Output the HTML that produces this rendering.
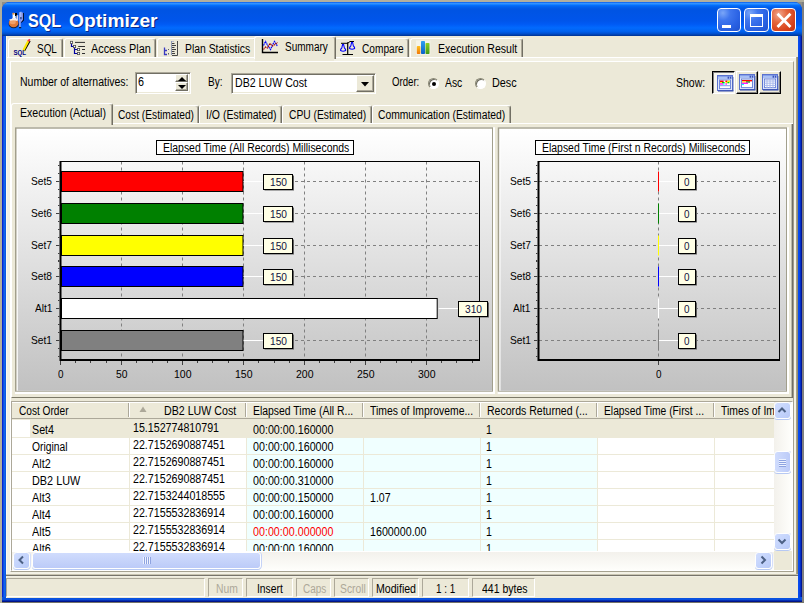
<!DOCTYPE html>
<html lang="en"><head><meta charset="utf-8"><title>SQL Optimizer</title>
<style>
html,body{margin:0;padding:0;}
body{width:804px;height:603px;overflow:hidden;position:relative;background:#b2af9d;font-family:"Liberation Sans",sans-serif;}
body div{position:absolute;box-sizing:border-box;}
.t{position:absolute;white-space:pre;transform-origin:0 50%;font-family:"Liberation Sans",sans-serif;}
svg{position:absolute;overflow:visible;}

</style></head>
<body>
<div style="left:0px;top:0px;width:804px;height:603px;background:#b2af9d;"></div>
<div style="left:802px;top:2px;width:2px;height:601px;background:#808080;"></div>
<div style="left:2px;top:602px;width:802px;height:1px;background:#77756a;"></div>
<div style="left:2px;top:2px;width:8px;height:8px;background:#8f8e88;"></div>
<div style="left:794px;top:2px;width:8px;height:8px;background:#8f8e88;"></div>
<div style="left:2px;top:2px;width:800px;height:600px;border-radius:8px 8px 0 0;background:#0b3fd0;overflow:hidden;"><div style="left:0;top:0;width:800px;height:34px;background:linear-gradient(to bottom,#0058ee 0%,#3593ff 4%,#288eff 6%,#127dff 8%,#036ffc 10%,#0262ee 14%,#0057e5 20%,#0054e3 24%,#0055eb 56%,#005bf5 66%,#026afe 76%,#0062ef 86%,#0052d6 92%,#0040ab 97%,#003092 100%);"></div><div style="left:0;top:34px;width:4px;height:566px;background:linear-gradient(to right,#0019cf 0,#0831d9 25%,#166aee 50%,#0855dd 100%);"></div><div style="left:796px;top:34px;width:4px;height:566px;background:linear-gradient(to right,#0a50ee 0,#0540e8 55%,#001aa0 72%,#00138c 100%);"></div><div style="left:0;top:595px;width:800px;height:5px;background:linear-gradient(to bottom,#0855dd 0,#0a50e0 50%,#001590 85%,#00107a 100%);"></div></div>
<div style="left:6px;top:36px;width:792px;height:562px;background:#ece9d8;"></div>
<span id="t0" class="t" style="left:28.40px;top:8.94px;font-size:17.5px;line-height:24px;color:#fff;font-weight:bold;transform:scaleX(0.9226);text-shadow:1px 1px 0 #0a2a8a;">SQL</span>
<span id="t1" class="t" style="left:68.60px;top:8.94px;font-size:17.5px;line-height:24px;color:#fff;font-weight:bold;transform:scaleX(1.0976);text-shadow:1px 1px 0 #0a2a8a;">Optimizer</span>
<div style="left:717px;top:8px;width:24px;height:24px;border:1px solid #fff;border-radius:4px;background:radial-gradient(circle at 22% 18%,#7aa6f8 0,#3f76ee 30%,#2a62e4 65%,#2052d0 100%);"><div style="left:4px;top:16px;width:9px;height:3px;background:#fff;"></div></div>
<div style="left:744px;top:8px;width:25px;height:24px;border:1px solid #fff;border-radius:4px;background:radial-gradient(circle at 22% 18%,#7aa6f8 0,#3f76ee 30%,#2a62e4 65%,#2052d0 100%);"><div style="left:5px;top:5px;width:13px;height:13px;border:1px solid #fff;border-top:3px solid #fff;"></div></div>
<div style="left:771px;top:8px;width:25px;height:24px;border:1px solid #fff;border-radius:4px;background:radial-gradient(circle at 30% 25%,#f0a890 0,#e4673e 35%,#d9431c 70%,#c43010 100%);"><svg style="left:0.5px;top:0" width="22" height="22" viewBox="0 0 22 22"><path d="M5.5 5.8 L16.5 17 M16.5 5.8 L5.5 17" stroke="#fff" stroke-width="2.8" stroke-linecap="square"/></svg></div>
<div style="left:6px;top:57px;width:792px;height:519px;background:#f3f1e5;border-top:1px solid #fff;border-left:1px solid #fff;"></div>
<div style="left:10px;top:61px;width:784px;height:511px;background:#ece9d8;border-top:1px solid #fff;border-left:1px solid #fff;border-right:1px solid #a5a18f;border-bottom:1px solid #a5a18f;"></div>
<div style="left:796px;top:57px;width:2px;height:519px;background:linear-gradient(to right,#b5ae92,#857f66);"></div>
<div style="left:8px;top:38px;width:55px;height:19px;background:#ece9d8;border-left:1px solid #fff;border-top:1px solid #fff;border-right:1px solid #716f64;box-shadow:inset -1px 0 0 #aca899;border-radius:3px 3px 0 0;"></div>
<div style="left:64px;top:38px;width:92px;height:19px;background:#ece9d8;border-left:1px solid #fff;border-top:1px solid #fff;border-right:1px solid #716f64;box-shadow:inset -1px 0 0 #aca899;border-radius:3px 3px 0 0;"></div>
<div style="left:157px;top:38px;width:100px;height:19px;background:#ece9d8;border-left:1px solid #fff;border-top:1px solid #fff;border-right:1px solid #716f64;box-shadow:inset -1px 0 0 #aca899;border-radius:3px 3px 0 0;"></div>
<div style="left:335px;top:38px;width:74px;height:19px;background:#ece9d8;border-left:1px solid #ece9d8;border-top:1px solid #fff;border-right:1px solid #716f64;box-shadow:inset -1px 0 0 #aca899;border-radius:3px 3px 0 0;"></div>
<div style="left:410px;top:38px;width:113px;height:19px;background:#ece9d8;border-left:1px solid #fff;border-top:1px solid #fff;border-right:1px solid #716f64;box-shadow:inset -1px 0 0 #aca899;border-radius:3px 3px 0 0;"></div>
<div style="left:254px;top:36px;width:82px;height:23px;background:#ece9d8;border-left:1px solid #fff;border-top:1px solid #fff;border-right:1px solid #716f64;box-shadow:inset -1px 0 0 #aca899;border-radius:3px 3px 0 0;"></div>
<div style="left:255px;top:57px;width:79px;height:4px;background:#ece9d8;"></div>
<span id="t2" class="t" style="left:36.80px;top:40.84px;font-size:12px;line-height:16px;color:#000;transform:scaleX(0.8286);">SQL</span>
<span id="t3" class="t" style="left:90.80px;top:40.84px;font-size:12px;line-height:16px;color:#000;transform:scaleX(0.9041);">Access Plan</span>
<span id="t4" class="t" style="left:184.60px;top:40.84px;font-size:12px;line-height:16px;color:#000;transform:scaleX(0.8650);">Plan Statistics</span>
<span id="t5" class="t" style="left:284.60px;top:38.84px;font-size:12px;line-height:16px;color:#000;transform:scaleX(0.8336);">Summary</span>
<span id="t6" class="t" style="left:361.70px;top:40.84px;font-size:12px;line-height:16px;color:#000;transform:scaleX(0.8448);">Compare</span>
<span id="t7" class="t" style="left:437.80px;top:40.84px;font-size:12px;line-height:16px;color:#000;transform:scaleX(0.8795);">Execution Result</span>
<svg style="left:8px;top:11px" width="18" height="18" viewBox="0 0 18 18"><ellipse cx="5.7" cy="12.9" rx="5.1" ry="4.3" fill="#1a0a00" opacity=".75"/><path d="M4.6 2.2 H7.6 V7 L9.5 9 H2.6 L4.6 7Z" fill="#fff"/><rect x="4.6" y="1.8" width="1.8" height="1.8" fill="#f09030"/><path d="M7 2 H9 V6.5 H8 V5 H7Z" fill="#000"/><path d="M8.4 4.5 L10.2 4 V10 L8.4 9Z" fill="#d8d8f4"/><ellipse cx="5.6" cy="12" rx="4.8" ry="4.2" fill="#e07a38"/><ellipse cx="4.8" cy="11" rx="3" ry="2.2" fill="#f0a068"/><path d="M1.2 8.6 Q5.6 6.8 10 8.8 L9 10 Q5.6 8.6 2 9.8Z" fill="#f4f0f0"/><path d="M14.6 2 H15.8 V9.5 L13.2 12 V10.5 L14.6 9Z" fill="#000"/><path d="M11.2 1.2 H12.6 V16.4 H11.2Z" fill="#b4b4f0"/><path d="M12.6 0.8 H13.4 V6 H12.6Z" fill="#fff"/><path d="M13.4 1.4 H14.8 V9 L12.6 11.4 V9.4 L13.4 8.4Z" fill="#a8a8ee"/><rect x="12.4" y="6.4" width="1" height="1.2" fill="#000"/><rect x="11" y="16.2" width="2.2" height="1" fill="#000"/></svg>
<svg style="left:12px;top:39px" width="20" height="19" viewBox="0 0 20 19"><path d="M12.3 11.8 L17.9 1.8" stroke="#000" stroke-width="1.6"/><path d="M11.6 11 L16.6 1.6" stroke="#ffe800" stroke-width="2.2"/><path d="M16 2.2 L17.2 0.9 L18 1.5" stroke="#ff3050" stroke-width="1.6" fill="none"/><path d="M11.2 10.4 L12 12.4 L13 11.2Z" fill="#e0b000"/><text x="1.4" y="16.2" font-family="Liberation Sans, sans-serif" font-weight="bold" font-size="7.2" fill="#000080" textLength="12.6" lengthAdjust="spacingAndGlyphs">SQL</text></svg>
<svg style="left:68px;top:38px" width="20" height="20" viewBox="0 0 20 20"><path d="M3.5 5 V8.5 H6 M6.5 9.5 V15.5 H10 M6.5 11.5 H10" stroke="#0000a0" stroke-width="1.2" fill="none"/><path d="M7 4.4 H17 M10.2 8.5 H17 M14 11.5 H17 M14 15.5 H17" stroke="#303030" stroke-width="1"/><rect x="2.4" y="3.3000000000000003" width="2.2" height="2.2" fill="#fff" stroke="#505050" stroke-width=".8"/><rect x="5.4" y="7.4" width="2.2" height="2.2" fill="#fff" stroke="#505050" stroke-width=".8"/><rect x="9.4" y="10.4" width="2.2" height="2.2" fill="#fff" stroke="#505050" stroke-width=".8"/><rect x="9.4" y="14.4" width="2.2" height="2.2" fill="#fff" stroke="#505050" stroke-width=".8"/></svg>
<svg style="left:160px;top:38px" width="20" height="20" viewBox="0 0 20 20"><path d="M4.5 9.5 V16.5 H7 M4.5 12.5 H7" stroke="#3a3ac0" stroke-width="1.3" fill="none"/><path d="M8.5 11 v1 M8.5 15 v1.5" stroke="#606060" stroke-width="1"/><path d="M11.5 3 V17" stroke="#9098b0" stroke-width="1"/><path d="M17.5 3 V17.5 H12" stroke="#484848" stroke-width="1" fill="none"/><path d="M12 5.5 H14.5 M12 7.5 H16 M12 9.5 H14.5 M12 11.5 H16 M12 13.5 H14.5 M12 15.5 H15" stroke="#404040" stroke-width="1"/><path d="M12 3.5 H14" stroke="#b0b8d0" stroke-width="1"/></svg>
<svg style="left:258px;top:36px" width="24" height="20" viewBox="0 0 24 20"><path d="M4.5 3 V16.5 H20" stroke="#000" stroke-width="1.4" fill="none"/><path d="M5.5 9.5 L7.5 5.5 L10 10 L12.5 13.5 L14.5 9 L16.5 5.5 L18.5 8.5 L19.5 10.5" stroke="#0000ff" stroke-width="1.2" fill="none" stroke-dasharray="1.6 .6"/><path d="M5.5 13.5 L7.5 11 L9.5 12 L12 7.5 L14.5 10 L17 8.5 L19.5 6.5" stroke="#a00000" stroke-width="1.2" fill="none" stroke-dasharray="1.6 .6"/></svg>
<svg style="left:338px;top:38px" width="20" height="20" viewBox="0 0 20 20"><path d="M9.7 4.2 V16.5 M4.5 16.5 H15" stroke="#000" stroke-width="1.2" fill="none"/><path d="M3 5.3 H9.7 L12 3.5 H16" stroke="#000" stroke-width="1" fill="none"/><path d="M4.6 6.5 L5.6 6.5 L6.4 10 Q8 11 7.6 12.6 Q5 14 2.6 12.6 Q2.2 11 3.8 10Z" fill="none" stroke="#0000ff" stroke-width="1.1"/><path d="M13.6 4.5 L14.6 4.5 L15.4 8 Q17 9 16.6 10.6 Q14 12 11.6 10.6 Q11.2 9 12.8 8Z" fill="none" stroke="#0000ff" stroke-width="1.1"/><rect x="4.6" y="6" width="1.2" height="1.2" fill="#0000ff"/><rect x="13.6" y="4" width="1.2" height="1.2" fill="#0000ff"/></svg>
<svg style="left:414px;top:38px" width="20" height="20" viewBox="0 0 20 20"><defs><linearGradient id="go" x1="0" y1="0" x2="0" y2="1"><stop offset="0" stop-color="#ffc020"/><stop offset="1" stop-color="#f07808"/></linearGradient><linearGradient id="gb" x1="0" y1="0" x2="0" y2="1"><stop offset="0" stop-color="#30a0f0"/><stop offset="1" stop-color="#0860c8"/></linearGradient><linearGradient id="gg" x1="0" y1="0" x2="0" y2="1"><stop offset="0" stop-color="#90d020"/><stop offset="1" stop-color="#409818"/></linearGradient></defs><rect x="2" y="2.4" width="14.4" height="14.4" fill="#f8f6ee" opacity=".8"/><rect x="2.8" y="8" width="3.6" height="8" rx=".8" fill="url(#go)"/><rect x="7" y="3" width="4" height="13" rx=".8" fill="url(#gb)"/><rect x="11.5" y="5" width="4" height="11" rx=".8" fill="url(#gg)"/></svg>
<span id="t8" class="t" style="left:19.50px;top:73.84px;font-size:12px;line-height:16px;color:#000;transform:scaleX(0.8746);">Number of alternatives:</span>
<div style="left:135px;top:72px;width:56px;height:22px;background:#fff;border:1px solid;border-color:#aca899 #fff #fff #aca899;box-shadow:inset 1px 1px 0 #716f64,inset -1px -1px 0 #ece9d8;"></div>
<div style="left:175px;top:74px;width:13px;height:8px;background:#ece9d8;border:1px solid;border-color:#fff #716f64 #716f64 #fff;box-shadow:inset -1px -1px 0 #aca899;"><svg style="left:1.5px;top:1.5px" width="8" height="4"><path d="M4 0 L8 4 L0 4Z" fill="#000"/></svg></div>
<div style="left:175px;top:82px;width:13px;height:9px;background:#ece9d8;border:1px solid;border-color:#fff #716f64 #716f64 #fff;box-shadow:inset -1px -1px 0 #aca899;"><svg style="left:1.5px;top:1.5px" width="8" height="4"><path d="M0 0 L8 0 L4 4Z" fill="#000"/></svg></div>
<span id="t9" class="t" style="left:138.40px;top:73.84px;font-size:12px;line-height:16px;color:#000;transform:scaleX(0.8972);">6</span>
<span id="t10" class="t" style="left:208.00px;top:73.84px;font-size:12px;line-height:16px;color:#000;transform:scaleX(0.8360);">By:</span>
<div style="left:231px;top:73px;width:145px;height:21px;background:#fff;border:1px solid;border-color:#aca899 #fff #fff #aca899;box-shadow:inset 1px 1px 0 #716f64,inset -1px -1px 0 #ece9d8;"></div>
<div style="left:356px;top:75px;width:18px;height:17px;background:#ece9d8;border:1px solid;border-color:#fff #716f64 #716f64 #fff;box-shadow:inset -1px -1px 0 #aca899;"><svg style="left:3.5px;top:6px" width="8" height="4.5"><path d="M0 0 L8 0 L4 4.5Z" fill="#000"/></svg></div>
<span id="t11" class="t" style="left:235.00px;top:74.84px;font-size:12px;line-height:16px;color:#000;transform:scaleX(0.8850);">DB2 LUW Cost</span>
<span id="t12" class="t" style="left:391.70px;top:73.84px;font-size:12px;line-height:16px;color:#000;transform:scaleX(0.8026);">Order:</span>
<div style="left:428.0px;top:78.0px;width:11px;height:11px;border-radius:50%;background:#fff;border:1px solid;border-color:#8a8874 #fff #fff #8a8874;box-shadow:inset 1px 1px 0 #6e6c60;"><div style="left:2.5px;top:2.5px;width:4px;height:4px;border-radius:50%;background:#000;"></div></div>
<div style="left:474.5px;top:78.0px;width:11px;height:11px;border-radius:50%;background:#fff;border:1px solid;border-color:#8a8874 #fff #fff #8a8874;box-shadow:inset 1px 1px 0 #6e6c60;"></div>
<span id="t13" class="t" style="left:444.70px;top:74.84px;font-size:12px;line-height:16px;color:#000;transform:scaleX(0.8643);">Asc</span>
<span id="t14" class="t" style="left:492.00px;top:74.84px;font-size:12px;line-height:16px;color:#000;transform:scaleX(0.9033);">Desc</span>
<span id="t15" class="t" style="left:676.20px;top:74.84px;font-size:12px;line-height:16px;color:#000;transform:scaleX(0.8753);">Show:</span>
<div style="left:712px;top:71px;width:23px;height:23px;background:#f6f5ee;border:1px solid;border-color:#000 #fff #fff #000;box-shadow:inset 1px 1px 0 #808080;"><svg style="left:3.5px;top:3px" width="17" height="17" viewBox="0 0 17 17"><rect x="0.5" y="0.5" width="15" height="15" fill="#dfe6fb" stroke="#5a72cf" stroke-width="1"/><rect x="1" y="1" width="14" height="3.2" fill="#a9c0f4"/><rect x="1" y="1" width="14" height="1" fill="#86a0ea"/><rect x="10.6" y="1.7" width="1.4" height="2" fill="#3a50b8"/><rect x="12.8" y="1.7" width="1.4" height="2" fill="#3a50b8"/><rect x="2.5" y="5" width="11" height="8.6" fill="#fff" stroke="#7088da" stroke-width="1"/><rect x="3" y="5.6" width="3.6" height="1.4" fill="#f00"/><rect x="8.4" y="5.6" width="2" height="1.4" fill="#f00"/><rect x="10.4" y="5.6" width="2.6" height="1.4" fill="#ff0"/><rect x="3" y="7" width="2" height="1.3" fill="#ff0"/><rect x="5" y="7" width="2.6" height="1.3" fill="#0c0"/><rect x="8.4" y="7" width="2" height="1.3" fill="#ff0"/><rect x="10.4" y="7" width="2" height="1.3" fill="#0c0"/><rect x="3" y="8.3" width="3" height="1.3" fill="#f0f"/><rect x="6" y="8.3" width="1.6" height="1.3" fill="#0ff"/><rect x="8.4" y="8.3" width="1.6" height="1.3" fill="#f0f"/><rect x="2.5" y="10.2" width="11" height="1" fill="#7f9ae6"/><rect x="1" y="15.4" width="15.4" height="1.1" fill="#3048a8"/><rect x="15.6" y="2" width="1" height="14" fill="#3048a8" opacity=".6"/></svg></div>
<div style="left:736px;top:71px;width:22px;height:23px;background:#ece9d8;border:1px solid;border-color:#fff #000 #000 #fff;box-shadow:inset -1px -1px 0 #808080;"><svg style="left:2px;top:2px" width="17" height="17" viewBox="0 0 17 17"><rect x="0.5" y="0.5" width="15" height="15" fill="#dfe6fb" stroke="#5a72cf" stroke-width="1"/><rect x="1" y="1" width="14" height="3.2" fill="#a9c0f4"/><rect x="1" y="1" width="14" height="1" fill="#86a0ea"/><rect x="10.6" y="1.7" width="1.4" height="2" fill="#3a50b8"/><rect x="12.8" y="1.7" width="1.4" height="2" fill="#3a50b8"/><rect x="2.5" y="5" width="11" height="8.6" fill="#fff" stroke="#7088da" stroke-width="1"/><rect x="3" y="6" width="10" height="1.4" fill="#f00"/><rect x="3" y="7.4" width="4" height="1.2" fill="#ff0"/><rect x="7" y="7.4" width="4" height="1.2" fill="#080"/><rect x="3" y="8.6" width="6" height="1.3" fill="#f0f"/><rect x="3" y="9.9" width="2" height="1.2" fill="#0ff"/><rect x="1" y="15.4" width="15.4" height="1.1" fill="#3048a8"/><rect x="15.6" y="2" width="1" height="14" fill="#3048a8" opacity=".6"/></svg></div>
<div style="left:759px;top:71px;width:22px;height:23px;background:#ece9d8;border:1px solid;border-color:#fff #000 #000 #fff;box-shadow:inset -1px -1px 0 #808080;"><svg style="left:2px;top:2px" width="17" height="17" viewBox="0 0 17 17"><rect x="0.5" y="0.5" width="15" height="15" fill="#dfe6fb" stroke="#5a72cf" stroke-width="1"/><rect x="1" y="1" width="14" height="3.2" fill="#a9c0f4"/><rect x="1" y="1" width="14" height="1" fill="#86a0ea"/><rect x="10.6" y="1.7" width="1.4" height="2" fill="#3a50b8"/><rect x="12.8" y="1.7" width="1.4" height="2" fill="#3a50b8"/><rect x="2.5" y="5" width="11" height="8.6" fill="#fff" stroke="#7088da" stroke-width="1"/><path d="M2.5 7H13.5M2.5 9.2H13.5M2.5 11.4H13.5M5 5V14M8 5V14M11 5V14" stroke="#a8b8ec" stroke-width="1" fill="none"/><rect x="1" y="15.4" width="15.4" height="1.1" fill="#3048a8"/><rect x="15.6" y="2" width="1" height="14" fill="#3048a8" opacity=".6"/></svg></div>
<div style="left:11px;top:123px;width:782px;height:275px;background:#ece9d8;border-top:1px solid #fff;border-left:1px solid #fff;border-bottom:1px solid #7d7a68;"></div>
<svg style="left:0;top:0" width="804" height="603" viewBox="0 0 804 603"><rect x="791.6" y="124" width="1.5" height="274" fill="#716f64"/></svg>
<div style="left:113px;top:105px;width:86px;height:18px;background:#ece9d8;border-left:1px solid #ece9d8;border-top:1px solid #fff;border-right:1px solid #716f64;box-shadow:inset -1px 0 0 #aca899;border-radius:3px 3px 0 0;"></div>
<div style="left:199px;top:105px;width:83px;height:18px;background:#ece9d8;border-left:1px solid #fff;border-top:1px solid #fff;border-right:1px solid #716f64;box-shadow:inset -1px 0 0 #aca899;border-radius:3px 3px 0 0;"></div>
<div style="left:282px;top:105px;width:90px;height:18px;background:#ece9d8;border-left:1px solid #fff;border-top:1px solid #fff;border-right:1px solid #716f64;box-shadow:inset -1px 0 0 #aca899;border-radius:3px 3px 0 0;"></div>
<div style="left:372px;top:105px;width:139px;height:18px;background:#ece9d8;border-left:1px solid #fff;border-top:1px solid #fff;border-right:1px solid #716f64;box-shadow:inset -1px 0 0 #aca899;border-radius:3px 3px 0 0;"></div>
<div style="left:11px;top:103px;width:102px;height:22px;background:#ece9d8;border-left:1px solid #fff;border-top:1px solid #fff;border-right:1px solid #716f64;box-shadow:inset -1px 0 0 #aca899;border-radius:3px 3px 0 0;"></div>
<div style="left:12px;top:123px;width:99px;height:3px;background:#ece9d8;"></div>
<span id="t16" class="t" style="left:19.50px;top:104.84px;font-size:12px;line-height:16px;color:#000;transform:scaleX(0.8830);">Execution (Actual)</span>
<span id="t17" class="t" style="left:117.50px;top:106.84px;font-size:12px;line-height:16px;color:#000;transform:scaleX(0.8505);">Cost (Estimated)</span>
<span id="t18" class="t" style="left:205.80px;top:106.84px;font-size:12px;line-height:16px;color:#000;transform:scaleX(0.8750);">I/O (Estimated)</span>
<span id="t19" class="t" style="left:288.60px;top:106.84px;font-size:12px;line-height:16px;color:#000;transform:scaleX(0.8564);">CPU (Estimated)</span>
<span id="t20" class="t" style="left:377.50px;top:106.84px;font-size:12px;line-height:16px;color:#000;transform:scaleX(0.8591);">Communication (Estimated)</span>
<svg style="left:0;top:0" width="804" height="603" viewBox="0 0 804 603"><defs><linearGradient id="pg15" x1="0" y1="0" x2="0" y2="1"><stop offset="0" stop-color="#ffffff"/><stop offset="1" stop-color="#c1c1c1"/></linearGradient></defs><rect x="15" y="127.3" width="480" height="266.7" fill="#fff"/><rect x="15" y="127.3" width="478" height="264.4" fill="#a29f8c"/><rect x="16.5" y="128.7" width="475.5" height="262.1" fill="#fff"/><rect x="17.8" y="130.0" width="474.2" height="260.8" fill="url(#pg15)"/></svg>
<svg style="left:0;top:0" width="804" height="603" viewBox="0 0 804 603"><defs><linearGradient id="pg497" x1="0" y1="0" x2="0" y2="1"><stop offset="0" stop-color="#ffffff"/><stop offset="1" stop-color="#c1c1c1"/></linearGradient></defs><rect x="497.7" y="127.3" width="291.3" height="266.7" fill="#fff"/><rect x="497.7" y="127.3" width="289.3" height="264.4" fill="#a29f8c"/><rect x="499.2" y="128.7" width="286.8" height="262.1" fill="#fff"/><rect x="500.5" y="130.0" width="285.5" height="260.8" fill="url(#pg497)"/></svg>
<svg style="left:0;top:0" width="804" height="603" viewBox="0 0 804 603"><path d="M121.5 161.5 V360" stroke="#808080" stroke-width="1" stroke-dasharray="3 3" fill="none"/><path d="M182.5 161.5 V360" stroke="#808080" stroke-width="1" stroke-dasharray="3 3" fill="none"/><path d="M243.5 161.5 V360" stroke="#808080" stroke-width="1" stroke-dasharray="3 3" fill="none"/><path d="M304.5 161.5 V360" stroke="#808080" stroke-width="1" stroke-dasharray="3 3" fill="none"/><path d="M365.5 161.5 V360" stroke="#808080" stroke-width="1" stroke-dasharray="3 3" fill="none"/><path d="M426.5 161.5 V360" stroke="#808080" stroke-width="1" stroke-dasharray="3 3" fill="none"/><path d="M61 181.5 H480" stroke="#808080" stroke-width="1" stroke-dasharray="3 3" fill="none"/><path d="M61 213.5 H480" stroke="#808080" stroke-width="1" stroke-dasharray="3 3" fill="none"/><path d="M61 245.5 H480" stroke="#808080" stroke-width="1" stroke-dasharray="3 3" fill="none"/><path d="M61 276.5 H480" stroke="#808080" stroke-width="1" stroke-dasharray="3 3" fill="none"/><path d="M61 308.5 H480" stroke="#808080" stroke-width="1" stroke-dasharray="3 3" fill="none"/><path d="M61 340.5 H480" stroke="#808080" stroke-width="1" stroke-dasharray="3 3" fill="none"/><path d="M60.5 161.5 H479.5 V360" stroke="#000" stroke-width="1" fill="none"/><path d="M60.5 161.0 V361 M59.5 360 H480" stroke="#000" stroke-width="2" fill="none"/><path d="M56 181.5 H59.5" stroke="#404040" stroke-width="1"/><path d="M58 165.5 H59.5" stroke="#404040" stroke-width="1"/><path d="M58 173.5 H59.5" stroke="#404040" stroke-width="1"/><path d="M58 189.5 H59.5" stroke="#404040" stroke-width="1"/><path d="M58 197.5 H59.5" stroke="#404040" stroke-width="1"/><path d="M56 213.5 H59.5" stroke="#404040" stroke-width="1"/><path d="M58 197.5 H59.5" stroke="#404040" stroke-width="1"/><path d="M58 205.5 H59.5" stroke="#404040" stroke-width="1"/><path d="M58 221.5 H59.5" stroke="#404040" stroke-width="1"/><path d="M58 229.5 H59.5" stroke="#404040" stroke-width="1"/><path d="M56 245.5 H59.5" stroke="#404040" stroke-width="1"/><path d="M58 229.5 H59.5" stroke="#404040" stroke-width="1"/><path d="M58 237.5 H59.5" stroke="#404040" stroke-width="1"/><path d="M58 253.5 H59.5" stroke="#404040" stroke-width="1"/><path d="M58 261.5 H59.5" stroke="#404040" stroke-width="1"/><path d="M56 276.5 H59.5" stroke="#404040" stroke-width="1"/><path d="M58 260.5 H59.5" stroke="#404040" stroke-width="1"/><path d="M58 268.5 H59.5" stroke="#404040" stroke-width="1"/><path d="M58 284.5 H59.5" stroke="#404040" stroke-width="1"/><path d="M58 292.5 H59.5" stroke="#404040" stroke-width="1"/><path d="M56 308.5 H59.5" stroke="#404040" stroke-width="1"/><path d="M58 292.5 H59.5" stroke="#404040" stroke-width="1"/><path d="M58 300.5 H59.5" stroke="#404040" stroke-width="1"/><path d="M58 316.5 H59.5" stroke="#404040" stroke-width="1"/><path d="M58 324.5 H59.5" stroke="#404040" stroke-width="1"/><path d="M56 340.5 H59.5" stroke="#404040" stroke-width="1"/><path d="M58 324.5 H59.5" stroke="#404040" stroke-width="1"/><path d="M58 332.5 H59.5" stroke="#404040" stroke-width="1"/><path d="M58 348.5 H59.5" stroke="#404040" stroke-width="1"/><path d="M58 356.5 H59.5" stroke="#404040" stroke-width="1"/><path d="M60.5 361 v4" stroke="#404040" stroke-width="1"/><path d="M75.5 361 v2" stroke="#404040" stroke-width="1"/><path d="M90.5 361 v2" stroke="#404040" stroke-width="1"/><path d="M106.5 361 v2" stroke="#404040" stroke-width="1"/><path d="M121.5 361 v4" stroke="#404040" stroke-width="1"/><path d="M136.5 361 v2" stroke="#404040" stroke-width="1"/><path d="M152.5 361 v2" stroke="#404040" stroke-width="1"/><path d="M167.5 361 v2" stroke="#404040" stroke-width="1"/><path d="M182.5 361 v4" stroke="#404040" stroke-width="1"/><path d="M197.5 361 v2" stroke="#404040" stroke-width="1"/><path d="M212.5 361 v2" stroke="#404040" stroke-width="1"/><path d="M228.5 361 v2" stroke="#404040" stroke-width="1"/><path d="M243.5 361 v4" stroke="#404040" stroke-width="1"/><path d="M258.5 361 v2" stroke="#404040" stroke-width="1"/><path d="M274.5 361 v2" stroke="#404040" stroke-width="1"/><path d="M289.5 361 v2" stroke="#404040" stroke-width="1"/><path d="M304.5 361 v4" stroke="#404040" stroke-width="1"/><path d="M319.5 361 v2" stroke="#404040" stroke-width="1"/><path d="M334.5 361 v2" stroke="#404040" stroke-width="1"/><path d="M350.5 361 v2" stroke="#404040" stroke-width="1"/><path d="M365.5 361 v4" stroke="#404040" stroke-width="1"/><path d="M380.5 361 v2" stroke="#404040" stroke-width="1"/><path d="M396.5 361 v2" stroke="#404040" stroke-width="1"/><path d="M411.5 361 v2" stroke="#404040" stroke-width="1"/><path d="M426.5 361 v4" stroke="#404040" stroke-width="1"/><path d="M441.5 361 v2" stroke="#404040" stroke-width="1"/><path d="M456.5 361 v2" stroke="#404040" stroke-width="1"/><path d="M472.5 361 v2" stroke="#404040" stroke-width="1"/><rect x="61.5" y="171.5" width="181.5" height="20" fill="#ff0000" stroke="#000" stroke-width="1"/><path d="M243.5 181.5 H263" stroke="#fff" stroke-width="1"/><rect x="264.5" y="175.5" width="29.5" height="15" fill="#606060"/><rect x="263.5" y="174.5" width="29" height="15" fill="#ffffe6" stroke="#000" stroke-width="1"/><rect x="61.5" y="203.5" width="181.5" height="20" fill="#008000" stroke="#000" stroke-width="1"/><path d="M243.5 213.5 H263" stroke="#fff" stroke-width="1"/><rect x="264.5" y="207.5" width="29.5" height="15" fill="#606060"/><rect x="263.5" y="206.5" width="29" height="15" fill="#ffffe6" stroke="#000" stroke-width="1"/><rect x="61.5" y="235.5" width="181.5" height="20" fill="#ffff00" stroke="#000" stroke-width="1"/><path d="M243.5 245.5 H263" stroke="#fff" stroke-width="1"/><rect x="264.5" y="239.5" width="29.5" height="15" fill="#606060"/><rect x="263.5" y="238.5" width="29" height="15" fill="#ffffe6" stroke="#000" stroke-width="1"/><rect x="61.5" y="266.5" width="181.5" height="20" fill="#0000ff" stroke="#000" stroke-width="1"/><path d="M243.5 276.5 H263" stroke="#fff" stroke-width="1"/><rect x="264.5" y="270.5" width="29.5" height="15" fill="#606060"/><rect x="263.5" y="269.5" width="29" height="15" fill="#ffffe6" stroke="#000" stroke-width="1"/><rect x="61.5" y="298.5" width="375.7" height="20" fill="#ffffff" stroke="#000" stroke-width="1"/><path d="M438.7 308.5 H458" stroke="#fff" stroke-width="1"/><rect x="459.5" y="302.5" width="29.5" height="15" fill="#606060"/><rect x="458.5" y="301.5" width="29" height="15" fill="#ffffe6" stroke="#000" stroke-width="1"/><rect x="61.5" y="330.5" width="181.5" height="20" fill="#808080" stroke="#000" stroke-width="1"/><path d="M243.5 340.5 H263" stroke="#fff" stroke-width="1"/><rect x="264.5" y="334.5" width="29.5" height="15" fill="#606060"/><rect x="263.5" y="333.5" width="29" height="15" fill="#ffffe6" stroke="#000" stroke-width="1"/></svg>
<span id="t21" class="t" style="left:31.20px;top:172.99px;font-size:11px;line-height:16px;color:#000;transform:scaleX(0.9275);">Set5</span>
<span id="t22" class="t" style="left:270.00px;top:173.99px;font-size:11px;line-height:16px;color:#101040;transform:scaleX(0.9260);">150</span>
<span id="t23" class="t" style="left:31.20px;top:204.99px;font-size:11px;line-height:16px;color:#000;transform:scaleX(0.9275);">Set6</span>
<span id="t24" class="t" style="left:270.00px;top:205.99px;font-size:11px;line-height:16px;color:#101040;transform:scaleX(0.9260);">150</span>
<span id="t25" class="t" style="left:31.20px;top:236.99px;font-size:11px;line-height:16px;color:#000;transform:scaleX(0.9275);">Set7</span>
<span id="t26" class="t" style="left:270.00px;top:237.99px;font-size:11px;line-height:16px;color:#101040;transform:scaleX(0.9260);">150</span>
<span id="t27" class="t" style="left:31.20px;top:267.99px;font-size:11px;line-height:16px;color:#000;transform:scaleX(0.9275);">Set8</span>
<span id="t28" class="t" style="left:270.00px;top:268.99px;font-size:11px;line-height:16px;color:#101040;transform:scaleX(0.9260);">150</span>
<span id="t29" class="t" style="left:34.70px;top:299.99px;font-size:11px;line-height:16px;color:#000;transform:scaleX(0.9226);">Alt1</span>
<span id="t30" class="t" style="left:465.00px;top:300.99px;font-size:11px;line-height:16px;color:#101040;transform:scaleX(0.9260);">310</span>
<span id="t31" class="t" style="left:31.20px;top:331.99px;font-size:11px;line-height:16px;color:#000;transform:scaleX(0.9275);">Set1</span>
<span id="t32" class="t" style="left:270.00px;top:332.99px;font-size:11px;line-height:16px;color:#101040;transform:scaleX(0.9260);">150</span>
<span id="t33" class="t" style="left:57.75px;top:366.19px;font-size:11px;line-height:16px;color:#000;transform:scaleX(0.8980);">0</span>
<span id="t34" class="t" style="left:115.75px;top:366.19px;font-size:11px;line-height:16px;color:#000;transform:scaleX(0.9388);">50</span>
<span id="t35" class="t" style="left:173.75px;top:366.19px;font-size:11px;line-height:16px;color:#000;transform:scaleX(0.9532);">100</span>
<span id="t36" class="t" style="left:234.75px;top:366.19px;font-size:11px;line-height:16px;color:#000;transform:scaleX(0.9532);">150</span>
<span id="t37" class="t" style="left:295.75px;top:366.19px;font-size:11px;line-height:16px;color:#000;transform:scaleX(0.9532);">200</span>
<span id="t38" class="t" style="left:356.75px;top:366.19px;font-size:11px;line-height:16px;color:#000;transform:scaleX(0.9532);">250</span>
<span id="t39" class="t" style="left:417.75px;top:366.19px;font-size:11px;line-height:16px;color:#000;transform:scaleX(0.9532);">300</span>
<div style="left:156px;top:140px;width:198px;height:15px;background:#fff;border:1px solid #000;"></div>
<span id="t40" class="t" style="left:162.60px;top:139.84px;font-size:12px;line-height:16px;color:#000;transform:scaleX(0.8702);">Elapsed Time (All Records) Milliseconds</span>
<svg style="left:0;top:0" width="804" height="603" viewBox="0 0 804 603"><path d="M658.5 161.5 V360" stroke="#808080" stroke-width="1" stroke-dasharray="3 3" fill="none"/><path d="M539 181.5 H779" stroke="#808080" stroke-width="1" stroke-dasharray="3 3" fill="none"/><path d="M539 213.5 H779" stroke="#808080" stroke-width="1" stroke-dasharray="3 3" fill="none"/><path d="M539 245.5 H779" stroke="#808080" stroke-width="1" stroke-dasharray="3 3" fill="none"/><path d="M539 276.5 H779" stroke="#808080" stroke-width="1" stroke-dasharray="3 3" fill="none"/><path d="M539 308.5 H779" stroke="#808080" stroke-width="1" stroke-dasharray="3 3" fill="none"/><path d="M539 340.5 H779" stroke="#808080" stroke-width="1" stroke-dasharray="3 3" fill="none"/><path d="M538.5 161.5 H779.5 V360" stroke="#000" stroke-width="1" fill="none"/><path d="M538.5 161.0 V361 M537.5 360 H780" stroke="#000" stroke-width="2" fill="none"/><path d="M534 181.5 H537.5" stroke="#404040" stroke-width="1"/><path d="M536 165.5 H537.5" stroke="#404040" stroke-width="1"/><path d="M536 173.5 H537.5" stroke="#404040" stroke-width="1"/><path d="M536 189.5 H537.5" stroke="#404040" stroke-width="1"/><path d="M536 197.5 H537.5" stroke="#404040" stroke-width="1"/><path d="M534 213.5 H537.5" stroke="#404040" stroke-width="1"/><path d="M536 197.5 H537.5" stroke="#404040" stroke-width="1"/><path d="M536 205.5 H537.5" stroke="#404040" stroke-width="1"/><path d="M536 221.5 H537.5" stroke="#404040" stroke-width="1"/><path d="M536 229.5 H537.5" stroke="#404040" stroke-width="1"/><path d="M534 245.5 H537.5" stroke="#404040" stroke-width="1"/><path d="M536 229.5 H537.5" stroke="#404040" stroke-width="1"/><path d="M536 237.5 H537.5" stroke="#404040" stroke-width="1"/><path d="M536 253.5 H537.5" stroke="#404040" stroke-width="1"/><path d="M536 261.5 H537.5" stroke="#404040" stroke-width="1"/><path d="M534 276.5 H537.5" stroke="#404040" stroke-width="1"/><path d="M536 260.5 H537.5" stroke="#404040" stroke-width="1"/><path d="M536 268.5 H537.5" stroke="#404040" stroke-width="1"/><path d="M536 284.5 H537.5" stroke="#404040" stroke-width="1"/><path d="M536 292.5 H537.5" stroke="#404040" stroke-width="1"/><path d="M534 308.5 H537.5" stroke="#404040" stroke-width="1"/><path d="M536 292.5 H537.5" stroke="#404040" stroke-width="1"/><path d="M536 300.5 H537.5" stroke="#404040" stroke-width="1"/><path d="M536 316.5 H537.5" stroke="#404040" stroke-width="1"/><path d="M536 324.5 H537.5" stroke="#404040" stroke-width="1"/><path d="M534 340.5 H537.5" stroke="#404040" stroke-width="1"/><path d="M536 324.5 H537.5" stroke="#404040" stroke-width="1"/><path d="M536 332.5 H537.5" stroke="#404040" stroke-width="1"/><path d="M536 348.5 H537.5" stroke="#404040" stroke-width="1"/><path d="M536 356.5 H537.5" stroke="#404040" stroke-width="1"/><path d="M658.5 361 v4" stroke="#404040" stroke-width="1"/><path d="M658.5 171.5 v20" stroke="#ff0000" stroke-width="1"/><path d="M659.0 181.5 H678" stroke="#fff" stroke-width="1"/><rect x="679.5" y="175.5" width="17.5" height="15" fill="#606060"/><rect x="678.5" y="174.5" width="17" height="15" fill="#ffffe6" stroke="#000" stroke-width="1"/><path d="M658.5 203.5 v20" stroke="#008000" stroke-width="1"/><path d="M659.0 213.5 H678" stroke="#fff" stroke-width="1"/><rect x="679.5" y="207.5" width="17.5" height="15" fill="#606060"/><rect x="678.5" y="206.5" width="17" height="15" fill="#ffffe6" stroke="#000" stroke-width="1"/><path d="M658.5 235.5 v20" stroke="#ffff00" stroke-width="1"/><path d="M659.0 245.5 H678" stroke="#fff" stroke-width="1"/><rect x="679.5" y="239.5" width="17.5" height="15" fill="#606060"/><rect x="678.5" y="238.5" width="17" height="15" fill="#ffffe6" stroke="#000" stroke-width="1"/><path d="M658.5 266.5 v20" stroke="#0000ff" stroke-width="1"/><path d="M659.0 276.5 H678" stroke="#fff" stroke-width="1"/><rect x="679.5" y="270.5" width="17.5" height="15" fill="#606060"/><rect x="678.5" y="269.5" width="17" height="15" fill="#ffffe6" stroke="#000" stroke-width="1"/><path d="M658.5 298.5 v20" stroke="#ffffff" stroke-width="1"/><path d="M659.0 308.5 H678" stroke="#fff" stroke-width="1"/><rect x="679.5" y="302.5" width="17.5" height="15" fill="#606060"/><rect x="678.5" y="301.5" width="17" height="15" fill="#ffffe6" stroke="#000" stroke-width="1"/><path d="M658.5 330.5 v20" stroke="#808080" stroke-width="1"/><path d="M659.0 340.5 H678" stroke="#fff" stroke-width="1"/><rect x="679.5" y="334.5" width="17.5" height="15" fill="#606060"/><rect x="678.5" y="333.5" width="17" height="15" fill="#ffffe6" stroke="#000" stroke-width="1"/></svg>
<span id="t41" class="t" style="left:509.60px;top:172.99px;font-size:11px;line-height:16px;color:#000;transform:scaleX(0.9275);">Set5</span>
<span id="t42" class="t" style="left:684.25px;top:173.99px;font-size:11px;line-height:16px;color:#101040;transform:scaleX(0.8980);">0</span>
<span id="t43" class="t" style="left:509.60px;top:204.99px;font-size:11px;line-height:16px;color:#000;transform:scaleX(0.9275);">Set6</span>
<span id="t44" class="t" style="left:684.25px;top:205.99px;font-size:11px;line-height:16px;color:#101040;transform:scaleX(0.8980);">0</span>
<span id="t45" class="t" style="left:509.60px;top:236.99px;font-size:11px;line-height:16px;color:#000;transform:scaleX(0.9275);">Set7</span>
<span id="t46" class="t" style="left:684.25px;top:237.99px;font-size:11px;line-height:16px;color:#101040;transform:scaleX(0.8980);">0</span>
<span id="t47" class="t" style="left:509.60px;top:267.99px;font-size:11px;line-height:16px;color:#000;transform:scaleX(0.9275);">Set8</span>
<span id="t48" class="t" style="left:684.25px;top:268.99px;font-size:11px;line-height:16px;color:#101040;transform:scaleX(0.8980);">0</span>
<span id="t49" class="t" style="left:513.10px;top:299.99px;font-size:11px;line-height:16px;color:#000;transform:scaleX(0.9226);">Alt1</span>
<span id="t50" class="t" style="left:684.25px;top:300.99px;font-size:11px;line-height:16px;color:#101040;transform:scaleX(0.8980);">0</span>
<span id="t51" class="t" style="left:509.60px;top:331.99px;font-size:11px;line-height:16px;color:#000;transform:scaleX(0.9275);">Set1</span>
<span id="t52" class="t" style="left:684.25px;top:332.99px;font-size:11px;line-height:16px;color:#101040;transform:scaleX(0.8980);">0</span>
<span id="t53" class="t" style="left:655.75px;top:366.19px;font-size:11px;line-height:16px;color:#000;transform:scaleX(0.8980);">0</span>
<div style="left:535px;top:140px;width:215px;height:15px;background:#fff;border:1px solid #000;"></div>
<span id="t54" class="t" style="left:541.70px;top:139.84px;font-size:12px;line-height:16px;color:#000;transform:scaleX(0.8694);">Elapsed Time (First n Records) Milliseconds</span>
<div style="left:11px;top:401px;width:782px;height:170px;background:#fff;border:1px solid;border-color:#aca899 #fff #fff #aca899;"></div>
<div style="left:12px;top:402px;width:762px;height:17px;background:#ece9d8;border-bottom:1px solid #aca899;box-shadow:inset 0 1px 0 #fff;"></div>
<div style="left:12px;top:419px;width:762px;height:18px;background:#ece9d8;"></div>
<div style="left:12px;top:420px;width:18px;height:17px;background:#fff;"></div>
<div style="left:246px;top:437px;width:351px;height:114px;background:#f0ffff;"></div>
<svg style="left:0;top:0" width="804" height="603" viewBox="0 0 804 603"><path d="M12 437.5 H774" stroke="#ece9d8" stroke-width="1"/><path d="M12 454.5 H774" stroke="#ece9d8" stroke-width="1"/><path d="M12 471.5 H774" stroke="#ece9d8" stroke-width="1"/><path d="M12 488.5 H774" stroke="#ece9d8" stroke-width="1"/><path d="M12 505.5 H774" stroke="#ece9d8" stroke-width="1"/><path d="M12 522.5 H774" stroke="#ece9d8" stroke-width="1"/><path d="M12 539.5 H774" stroke="#ece9d8" stroke-width="1"/><path d="M129.5 437 V551" stroke="#ece9d8" stroke-width="1"/><path d="M128.5 403 V417" stroke="#aca899" stroke-width="1"/><path d="M129.5 403 V417" stroke="#fff" stroke-width="1"/><path d="M246.5 437 V551" stroke="#ece9d8" stroke-width="1"/><path d="M245.5 403 V417" stroke="#aca899" stroke-width="1"/><path d="M246.5 403 V417" stroke="#fff" stroke-width="1"/><path d="M363.5 437 V551" stroke="#ece9d8" stroke-width="1"/><path d="M362.5 403 V417" stroke="#aca899" stroke-width="1"/><path d="M363.5 403 V417" stroke="#fff" stroke-width="1"/><path d="M480.5 437 V551" stroke="#ece9d8" stroke-width="1"/><path d="M479.5 403 V417" stroke="#aca899" stroke-width="1"/><path d="M480.5 403 V417" stroke="#fff" stroke-width="1"/><path d="M597.5 437 V551" stroke="#ece9d8" stroke-width="1"/><path d="M596.5 403 V417" stroke="#aca899" stroke-width="1"/><path d="M597.5 403 V417" stroke="#fff" stroke-width="1"/><path d="M714.5 437 V551" stroke="#ece9d8" stroke-width="1"/><path d="M713.5 403 V417" stroke="#aca899" stroke-width="1"/><path d="M714.5 403 V417" stroke="#fff" stroke-width="1"/><path d="M139.5 412 L143 406.5 L146.5 412Z" fill="#aca899" stroke="none"/></svg>
<span id="t55" class="t" style="left:18.50px;top:402.84px;font-size:12px;line-height:16px;color:#000;transform:scaleX(0.8435);">Cost Order</span>
<span id="t56" class="t" style="left:163.80px;top:402.84px;font-size:12px;line-height:16px;color:#000;transform:scaleX(0.8874);">DB2 LUW Cost</span>
<span id="t57" class="t" style="left:252.80px;top:402.84px;font-size:12px;line-height:16px;color:#000;transform:scaleX(0.8685);">Elapsed Time (All R...</span>
<span id="t58" class="t" style="left:369.70px;top:402.84px;font-size:12px;line-height:16px;color:#000;transform:scaleX(0.8670);">Times of Improveme...</span>
<span id="t59" class="t" style="left:486.60px;top:402.84px;font-size:12px;line-height:16px;color:#000;transform:scaleX(0.8787);">Records Returned (...</span>
<span id="t60" class="t" style="left:603.70px;top:402.84px;font-size:12px;line-height:16px;color:#000;transform:scaleX(0.8569);">Elapsed Time (First ...</span>
<div style="left:12px;top:420px;width:762px;height:131px;overflow:hidden;">
<span id="t61" class="t" style="left:20.00px;top:1.84px;font-size:12px;line-height:16px;color:#000;transform:scaleX(0.8911);">Set4</span>
<span id="t62" class="t" style="left:121.00px;top:-0.16px;font-size:12px;line-height:16px;color:#000;transform:scaleX(0.8886);">15.152774810791</span>
<span id="t63" class="t" style="left:240.50px;top:1.84px;font-size:12px;line-height:16px;color:#000;transform:scaleX(0.8935);">00:00:00.160000</span>
<span id="t64" class="t" style="left:474.00px;top:1.84px;font-size:12px;line-height:16px;color:#000;transform:scaleX(0.8822);">1</span>
<span id="t65" class="t" style="left:20.00px;top:18.84px;font-size:12px;line-height:16px;color:#000;transform:scaleX(0.8583);">Original</span>
<span id="t66" class="t" style="left:121.00px;top:16.84px;font-size:12px;line-height:16px;color:#000;transform:scaleX(0.8893);">22.7152690887451</span>
<span id="t67" class="t" style="left:240.50px;top:18.84px;font-size:12px;line-height:16px;color:#000;transform:scaleX(0.8935);">00:00:00.160000</span>
<span id="t68" class="t" style="left:474.00px;top:18.84px;font-size:12px;line-height:16px;color:#000;transform:scaleX(0.8822);">1</span>
<span id="t69" class="t" style="left:20.00px;top:35.84px;font-size:12px;line-height:16px;color:#000;transform:scaleX(0.9039);">Alt2</span>
<span id="t70" class="t" style="left:121.00px;top:33.84px;font-size:12px;line-height:16px;color:#000;transform:scaleX(0.8893);">22.7152690887451</span>
<span id="t71" class="t" style="left:240.50px;top:35.84px;font-size:12px;line-height:16px;color:#000;transform:scaleX(0.8935);">00:00:00.160000</span>
<span id="t72" class="t" style="left:474.00px;top:35.84px;font-size:12px;line-height:16px;color:#000;transform:scaleX(0.8822);">1</span>
<span id="t73" class="t" style="left:20.00px;top:52.84px;font-size:12px;line-height:16px;color:#000;transform:scaleX(0.9054);">DB2 LUW</span>
<span id="t74" class="t" style="left:121.00px;top:50.84px;font-size:12px;line-height:16px;color:#000;transform:scaleX(0.8893);">22.7152690887451</span>
<span id="t75" class="t" style="left:240.50px;top:52.84px;font-size:12px;line-height:16px;color:#000;transform:scaleX(0.8935);">00:00:00.310000</span>
<span id="t76" class="t" style="left:474.00px;top:52.84px;font-size:12px;line-height:16px;color:#000;transform:scaleX(0.8822);">1</span>
<span id="t77" class="t" style="left:20.00px;top:69.84px;font-size:12px;line-height:16px;color:#000;transform:scaleX(0.9039);">Alt3</span>
<span id="t78" class="t" style="left:121.00px;top:67.84px;font-size:12px;line-height:16px;color:#000;transform:scaleX(0.8893);">22.7153244018555</span>
<span id="t79" class="t" style="left:240.50px;top:69.84px;font-size:12px;line-height:16px;color:#000;transform:scaleX(0.8935);">00:00:00.150000</span>
<span id="t80" class="t" style="left:357.70px;top:69.84px;font-size:12px;line-height:16px;color:#000;transform:scaleX(0.8819);">1.07</span>
<span id="t81" class="t" style="left:474.00px;top:69.84px;font-size:12px;line-height:16px;color:#000;transform:scaleX(0.8822);">1</span>
<span id="t82" class="t" style="left:20.00px;top:86.84px;font-size:12px;line-height:16px;color:#000;transform:scaleX(0.9039);">Alt4</span>
<span id="t83" class="t" style="left:121.00px;top:84.84px;font-size:12px;line-height:16px;color:#000;transform:scaleX(0.8893);">22.7155532836914</span>
<span id="t84" class="t" style="left:240.50px;top:86.84px;font-size:12px;line-height:16px;color:#000;transform:scaleX(0.8935);">00:00:00.160000</span>
<span id="t85" class="t" style="left:474.00px;top:86.84px;font-size:12px;line-height:16px;color:#000;transform:scaleX(0.8822);">1</span>
<span id="t86" class="t" style="left:20.00px;top:103.84px;font-size:12px;line-height:16px;color:#000;transform:scaleX(0.9039);">Alt5</span>
<span id="t87" class="t" style="left:121.00px;top:101.84px;font-size:12px;line-height:16px;color:#000;transform:scaleX(0.8893);">22.7155532836914</span>
<span id="t88" class="t" style="left:240.50px;top:103.84px;font-size:12px;line-height:16px;color:#ff0000;transform:scaleX(0.8935);">00:00:00.000000</span>
<span id="t89" class="t" style="left:357.70px;top:103.84px;font-size:12px;line-height:16px;color:#000;transform:scaleX(0.8911);">1600000.00</span>
<span id="t90" class="t" style="left:474.00px;top:103.84px;font-size:12px;line-height:16px;color:#000;transform:scaleX(0.8822);">1</span>
<span id="t91" class="t" style="left:20.00px;top:120.84px;font-size:12px;line-height:16px;color:#000;transform:scaleX(0.9039);">Alt6</span>
<span id="t92" class="t" style="left:121.00px;top:118.84px;font-size:12px;line-height:16px;color:#000;transform:scaleX(0.8893);">22.7155532836914</span>
<span id="t93" class="t" style="left:240.50px;top:120.84px;font-size:12px;line-height:16px;color:#000;transform:scaleX(0.8935);">00:00:00.160000</span>
<span id="t94" class="t" style="left:474.00px;top:120.84px;font-size:12px;line-height:16px;color:#000;transform:scaleX(0.8822);">1</span>
</div>
<div style="left:714px;top:402px;width:60px;height:16px;overflow:hidden;">
<span id="t95" class="t" style="left:7.20px;top:0.84px;font-size:12px;line-height:16px;color:#000;transform:scaleX(0.8670);">Times of Improveme...</span>
</div>
<div style="left:774px;top:402px;width:17px;height:149px;background:linear-gradient(to right,#f3f1ec,#fefefb);"></div>
<div style="left:774px;top:402px;width:17px;height:17px;border:1px solid #fff;border-radius:3.5px;background:linear-gradient(135deg,#d2defe 0,#c4d4fc 50%,#b8c9f7 100%);box-shadow:0 1px 0 #b7c9f3,1px 0 0 #d5dffa;"><svg style="left:-1px;top:-1px" width="17" height="17" viewBox="0 0 17 17"><path d="M4.5 10 L8 6.5 L11.5 10" stroke="#4d6185" stroke-width="2" fill="none"/></svg></div>
<div style="left:774px;top:533px;width:17px;height:17px;border:1px solid #fff;border-radius:3.5px;background:linear-gradient(135deg,#d2defe 0,#c4d4fc 50%,#b8c9f7 100%);box-shadow:0 1px 0 #b7c9f3,1px 0 0 #d5dffa;"><svg style="left:-1px;top:-1px" width="17" height="17" viewBox="0 0 17 17"><path d="M4.5 6.5 L8 10 L11.5 6.5" stroke="#4d6185" stroke-width="2" fill="none"/></svg></div>
<div style="left:774px;top:451px;width:17px;height:22px;border:1px solid #fff;border-radius:3.5px;background:linear-gradient(to right,#d0dcfd,#bccbf8);box-shadow:0 1px 0 #b7c9f3,1px 0 0 #c5d3f7;"><div style="left:4px;top:7px;width:7px;height:1px;background:#eef3ff;box-shadow:0 1px 0 #8ea3e0,0 2px 0 #eef3ff,0 3px 0 #8ea3e0,0 4px 0 #eef3ff,0 5px 0 #8ea3e0,0 6px 0 #eef3ff,0 7px 0 #8ea3e0;"></div></div>
<div style="left:12px;top:552px;width:762px;height:18px;background:linear-gradient(to bottom,#f3f1ec,#fefefb);"></div>
<div style="left:13px;top:552px;width:17px;height:17px;border:1px solid #fff;border-radius:3.5px;background:linear-gradient(135deg,#d2defe 0,#c4d4fc 50%,#b8c9f7 100%);box-shadow:0 1px 0 #b7c9f3,1px 0 0 #d5dffa;"><svg style="left:-1px;top:-1px" width="17" height="17" viewBox="0 0 17 17"><path d="M10 4.5 L6.5 8 L10 11.5" stroke="#4d6185" stroke-width="2" fill="none"/></svg></div>
<div style="left:755px;top:552px;width:17px;height:17px;border:1px solid #fff;border-radius:3.5px;background:linear-gradient(135deg,#d2defe 0,#c4d4fc 50%,#b8c9f7 100%);box-shadow:0 1px 0 #b7c9f3,1px 0 0 #d5dffa;"><svg style="left:-1px;top:-1px" width="17" height="17" viewBox="0 0 17 17"><path d="M6.5 4.5 L10 8 L6.5 11.5" stroke="#4d6185" stroke-width="2" fill="none"/></svg></div>
<div style="left:32px;top:552px;width:228.5px;height:17px;border:1px solid #fff;border-radius:3.5px;background:linear-gradient(to bottom,#d0dcfd,#bccbf8);box-shadow:0 1px 0 #b7c9f3,1px 0 0 #c5d3f7;"><div style="left:110px;top:4px;width:1px;height:7px;background:#eef3ff;box-shadow:1px 0 0 #8ea3e0,2px 0 0 #eef3ff,3px 0 0 #8ea3e0,4px 0 0 #eef3ff,5px 0 0 #8ea3e0,6px 0 0 #eef3ff,7px 0 0 #8ea3e0;"></div></div>
<div style="left:774px;top:551px;width:18px;height:19px;background:#ece9d8;"></div>
<div style="left:791px;top:402px;width:1px;height:149px;background:#fefefb;"></div>
<div style="left:6px;top:36px;width:1px;height:562px;background:#fbfaf3;"></div>
<div style="left:6px;top:574px;width:792px;height:1px;background:#c9c5b2;"></div>
<div style="left:6px;top:575px;width:792px;height:1px;background:#77746a;"></div>
<div style="left:6px;top:576px;width:792px;height:1px;background:#f1efe3;"></div>
<div style="left:6px;top:578px;width:199px;height:19px;border:1px solid;border-color:#aca899 #fff #fff #aca899;"></div>
<div style="left:208px;top:578px;width:35px;height:19px;border:1px solid;border-color:#aca899 #fff #fff #aca899;"></div>
<div style="left:246px;top:578px;width:47px;height:19px;border:1px solid;border-color:#aca899 #fff #fff #aca899;"></div>
<div style="left:296px;top:578px;width:35px;height:19px;border:1px solid;border-color:#aca899 #fff #fff #aca899;"></div>
<div style="left:334px;top:578px;width:35px;height:19px;border:1px solid;border-color:#aca899 #fff #fff #aca899;"></div>
<div style="left:372px;top:578px;width:47px;height:19px;border:1px solid;border-color:#aca899 #fff #fff #aca899;"></div>
<div style="left:422px;top:578px;width:47px;height:19px;border:1px solid;border-color:#aca899 #fff #fff #aca899;"></div>
<div style="left:472px;top:578px;width:63px;height:19px;border:1px solid;border-color:#aca899 #fff #fff #aca899;"></div>
<span id="t96" class="t" style="left:215.70px;top:580.64px;font-size:12px;line-height:16px;color:#aca899;transform:scaleX(0.8602);">Num</span>
<span id="t97" class="t" style="left:257.20px;top:580.64px;font-size:12px;line-height:16px;color:#000;transform:scaleX(0.8596);">Insert</span>
<span id="t98" class="t" style="left:302.60px;top:580.64px;font-size:12px;line-height:16px;color:#aca899;transform:scaleX(0.8317);">Caps</span>
<span id="t99" class="t" style="left:339.50px;top:580.64px;font-size:12px;line-height:16px;color:#aca899;transform:scaleX(0.8596);">Scroll</span>
<span id="t100" class="t" style="left:376.00px;top:580.64px;font-size:12px;line-height:16px;color:#000;transform:scaleX(0.8818);">Modified</span>
<span id="t101" class="t" style="left:435.70px;top:580.64px;font-size:12px;line-height:16px;color:#000;transform:scaleX(0.8262);">1 : 1</span>
<span id="t102" class="t" style="left:482.00px;top:580.64px;font-size:12px;line-height:16px;color:#000;transform:scaleX(0.8742);">441 bytes</span>
</body></html>
